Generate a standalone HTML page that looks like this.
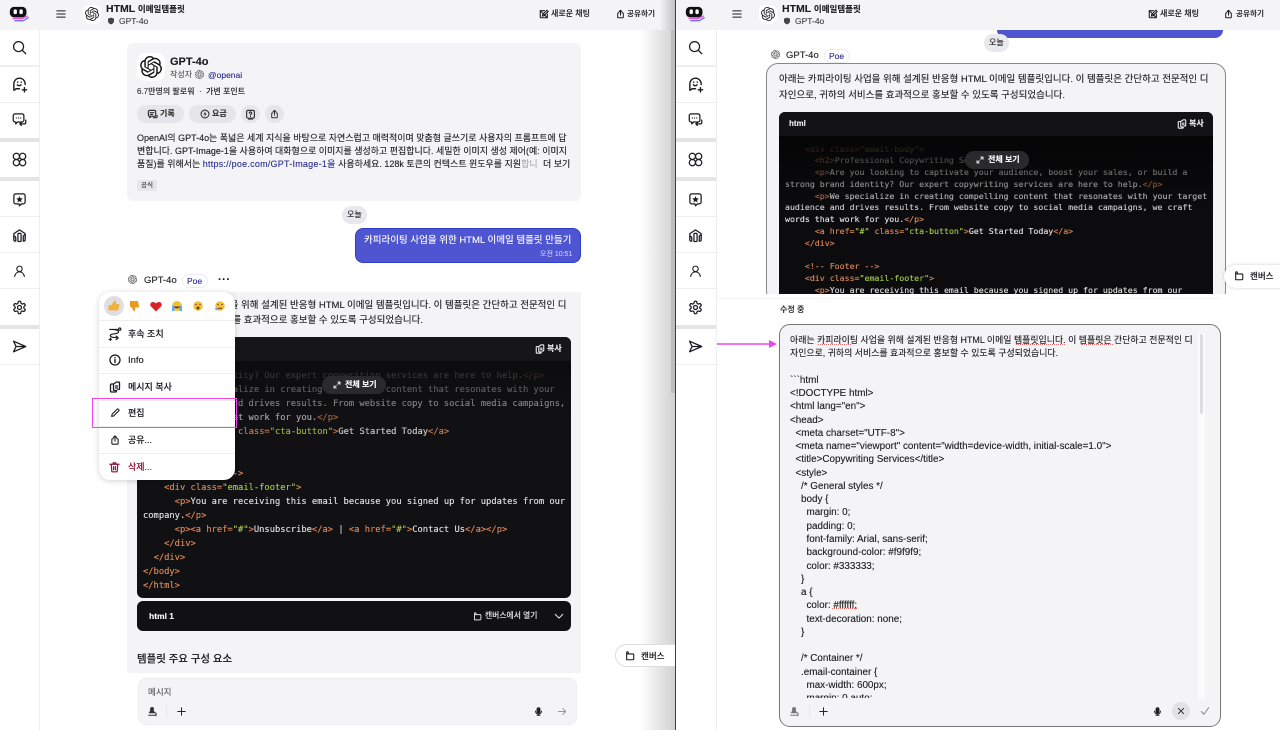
<!DOCTYPE html>
<html lang="ko"><head><meta charset="utf-8"><title>HTML 이메일템플릿</title>
<style>
html,body{margin:0;padding:0;width:1280px;height:730px;overflow:hidden;background:#fff}
body{position:relative;font-family:"Liberation Sans","Noto Sans CJK KR",sans-serif;color:#1b1b20;-webkit-text-stroke:.12px}
div,span.t,svg.i{position:absolute}
.t{position:absolute;white-space:nowrap;line-height:14px;font-size:10px}
.b{font-weight:700}
svg.i{fill:none;stroke:currentColor;stroke-width:2;stroke-linecap:round;stroke-linejoin:round;color:#1b1b20}
svg.i.s{stroke-width:2.6}
.c{position:absolute;white-space:pre;font-family:"DejaVu Sans Mono","Liberation Mono",monospace;color:#e4e4e4}
.o{color:#e08a5c}.g{color:#a8cc50}
.sep{background:#eeeef0}
.thick{background:#e4e4e7}
.menu-line{left:0;width:136px;height:1px;background:#eeeef0}
.e{position:absolute;white-space:nowrap;line-height:13.27px;font-size:9.900px;color:#1b1b20}
.k{font-size:8.920px}
.sq{height:0;border-bottom:1px dotted #e07070}
.hk{font-size:8.500px}
</style></head><body>
<svg width="0" height="0" style="position:absolute">
<defs>
<symbol id="oai" viewBox="0 0 24 24"><path stroke="none" fill="currentColor" d="M22.2819 9.8211a5.9847 5.9847 0 0 0-.5157-4.9108 6.0462 6.0462 0 0 0-6.5098-2.9A6.0651 6.0651 0 0 0 4.9807 4.1818a5.9847 5.9847 0 0 0-3.9977 2.9 6.0462 6.0462 0 0 0 .7427 7.0966 5.98 5.98 0 0 0 .511 4.9107 6.051 6.051 0 0 0 6.5146 2.9001A5.9847 5.9847 0 0 0 13.2599 24a6.0557 6.0557 0 0 0 5.7718-4.2058 5.9894 5.9894 0 0 0 3.9977-2.9001 6.0557 6.0557 0 0 0-.7475-7.0729zm-9.022 12.6081a4.4755 4.4755 0 0 1-2.8764-1.0408l.1419-.0804 4.7783-2.7582a.7948.7948 0 0 0 .3927-.6813v-6.7369l2.02 1.1686a.071.071 0 0 1 .038.052v5.5826a4.504 4.504 0 0 1-4.4945 4.4944zm-9.6607-4.1254a4.4708 4.4708 0 0 1-.5346-3.0137l.142.0852 4.783 2.7582a.7712.7712 0 0 0 .7806 0l5.8428-3.3685v2.3324a.0804.0804 0 0 1-.0332.0615L9.74 19.9502a4.4992 4.4992 0 0 1-6.1408-1.6464zM2.3408 7.8956a4.485 4.485 0 0 1 2.3655-1.9728V11.6a.7664.7664 0 0 0 .3879.6765l5.8144 3.3543-2.0201 1.1685a.0757.0757 0 0 1-.071 0l-4.8303-2.7865A4.504 4.504 0 0 1 2.3408 7.872zm16.5963 3.8558L13.1038 8.364 15.1192 7.2a.0757.0757 0 0 1 .071 0l4.8303 2.7913a4.4944 4.4944 0 0 1-.6765 8.1042v-5.6772a.79.79 0 0 0-.407-.667zm2.0107-3.0231l-.142-.0852-4.7735-2.7818a.7759.7759 0 0 0-.7854 0L9.409 9.2297V6.8974a.0662.0662 0 0 1 .0284-.0615l4.8303-2.7866a4.4992 4.4992 0 0 1 6.6802 4.66zM8.3065 12.863l-2.02-1.1638a.0804.0804 0 0 1-.038-.0567V6.0742a4.4992 4.4992 0 0 1 7.3757-3.4537l-.142.0805L8.704 5.459a.7948.7948 0 0 0-.3927.6813zm1.0976-2.3654l2.602-1.4998 2.6069 1.4998v2.9994l-2.5974 1.4997-2.6067-1.4997Z"/></symbol>
<symbol id="logo" viewBox="0 0 24 24"><path stroke="#e94fe0" stroke-width="1.600" d="M5 17.500h11l6-3"/><path stroke="#7a6cf0" stroke-width="1.600" d="M7 20h10l6-3.500"/><rect x="1" y="3.500" width="20" height="12.500" rx="5" fill="#111" stroke="none"/><rect x="5.500" y="6.500" width="4" height="5.600" rx="1.700" fill="#fff" stroke="none"/><rect x="12.500" y="6.500" width="4" height="5.600" rx="1.700" fill="#fff" stroke="none"/></symbol>
<symbol id="search" viewBox="0 0 24 24"><circle cx="10.500" cy="10.500" r="8"/><path d="M16.500 16.500l5.500 5.500"/></symbol>
<symbol id="add" viewBox="0 0 24 24"><path d="M4 20v-9a8 8 0 0 1 15-3.800c.6 1.100 1 2.400 1 3.800v1M4 20c2-.4 3-2 3-2h5"/><path d="M9 12.500c1 1.600 4 1.600 5.200 0"/><path d="M9.500 8.500v.3M14.500 8.500v.3"/><path d="M19 16.500v6M16 19.500h6"/></symbol>
<symbol id="chat" viewBox="0 0 24 24"><path d="M5 3h11a3 3 0 0 1 3 3v7a3 3 0 0 1-3 3H9l-3 3v-3H5a3 3 0 0 1-3-3V6a3 3 0 0 1 3-3z"/><path d="M7 9.500v.1M10.500 9.500v.1M14 9.500v.1"/><path d="M22 13v4a2 2 0 0 1-2 2h-7M15 21.500L12.500 19l2.500-2"/></symbol>
<symbol id="apps" viewBox="0 0 24 24"><circle cx="7" cy="7" r="5"/><circle cx="17" cy="7" r="5"/><circle cx="7" cy="17" r="5"/><circle cx="17" cy="17" r="5"/></symbol>
<symbol id="star" viewBox="0 0 24 24"><path d="M6 3h12a3 3 0 0 1 3 3v10a3 3 0 0 1-3 3h-3l-3 3-1-3H6a3 3 0 0 1-3-3V6a3 3 0 0 1 3-3z"/><path fill="currentColor" stroke="none" d="M12 6.500l1.600 3.400 3.700.4-2.800 2.500.8 3.700-3.300-1.900-3.300 1.900.8-3.700-2.800-2.500 3.700-.4z"/></symbol>
<symbol id="an" viewBox="0 0 24 24"><path d="M3 9l9-6 9 6M3 9v8M21 9v8"/><path d="M3 13a3 3 0 0 1 3 3v5H5a2 2 0 0 1-2-2z"/><rect x="9.500" y="8.500" width="5" height="13" rx="1"/><path d="M21 11a3 3 0 0 0-3 3v7h1a2 2 0 0 0 2-2z"/></symbol>
<symbol id="person" viewBox="0 0 24 24"><circle cx="12" cy="8" r="5"/><path d="M3 22c1-5 4.500-8.500 9-8.500s8 3.500 9 8.500"/></symbol>
<symbol id="gear" viewBox="0 0 24 24"><path d="M12.220 2h-.44a2 2 0 0 0-2 2v.18a2 2 0 0 1-1 1.730l-.43.25a2 2 0 0 1-2 0l-.15-.08a2 2 0 0 0-2.730.73l-.22.38a2 2 0 0 0 .73 2.730l.15.1a2 2 0 0 1 1 1.720v.51a2 2 0 0 1-1 1.740l-.15.09a2 2 0 0 0-.73 2.730l.22.38a2 2 0 0 0 2.730.73l.15-.08a2 2 0 0 1 2 0l.43.25a2 2 0 0 1 1 1.730V20a2 2 0 0 0 2 2h.44a2 2 0 0 0 2-2v-.18a2 2 0 0 1 1-1.730l.43-.25a2 2 0 0 1 2 0l.15.08a2 2 0 0 0 2.730-.73l.22-.39a2 2 0 0 0-.73-2.730l-.15-.08a2 2 0 0 1-1-1.740v-.5a2 2 0 0 1 1-1.740l.15-.09a2 2 0 0 0 .73-2.730l-.22-.38a2 2 0 0 0-2.730-.73l-.15.08a2 2 0 0 1-2 0l-.43-.25a2 2 0 0 1-1-1.730V4a2 2 0 0 0-2-2z"/><circle cx="12" cy="12" r="3.200"/></symbol>
<symbol id="send" viewBox="0 0 24 24"><path d="M2.500 3.500L22 12 2.500 20.500 6.500 12zM6.500 12H22"/></symbol>
<symbol id="menu" viewBox="0 0 24 24"><path d="M2 4.500h20M2 12h20M2 19.500h20"/></symbol>
<symbol id="shield" viewBox="0 0 24 24"><path fill="currentColor" stroke="none" d="M12 2l9 3v7c0 5-4 8.500-9 10-5-1.500-9-5-9-10V5z"/></symbol>
<symbol id="new" viewBox="0 0 24 24"><path d="M20 12v7a2 2 0 0 1-2 2H5a2 2 0 0 1-2-2V6a2 2 0 0 1 2-2h8"/><path d="M8 17l1-4L19 3l3 3-10 10zM3 4l17 17"/></symbol>
<symbol id="share" viewBox="0 0 24 24"><path d="M8 9H6a1.500 1.500 0 0 0-1.500 1.500v10A1.500 1.500 0 0 0 6 22h12a1.500 1.500 0 0 0 1.500-1.500v-10A1.500 1.500 0 0 0 18 9h-2"/><path d="M12 15V2.500M8 6l4-4 4 4"/></symbol>
<symbol id="hist" viewBox="0 0 24 24"><path d="M6 3h10a3 3 0 0 1 3 3v7a3 3 0 0 1-3 3H9l-3 3v-3a3 3 0 0 1-3-3V6a3 3 0 0 1 3-3z"/><path d="M7 8h8M7 12h5"/><path d="M22 14v3a2 2 0 0 1-2 2h-6"/></symbol>
<symbol id="bolt" viewBox="0 0 24 24"><circle cx="12" cy="12" r="9.500"/><path fill="currentColor" stroke="none" d="M13 5.500L8 13h3.500L11 18.500l5-7.500h-3.500z"/></symbol>
<symbol id="qm" viewBox="0 0 24 24"><rect x="3.500" y="3" width="17" height="17" rx="3"/><path d="M9.500 9a2.500 2.500 0 1 1 3.500 2.300c-.7.400-1 .8-1 1.700M12 16v.2"/><path d="M8 22h8"/></symbol>
<symbol id="copy" viewBox="0 0 24 24"><path d="M9 6H5a2 2 0 0 0-2 2v12a2 2 0 0 0 2 2h8a2 2 0 0 0 2-2v-1"/><path d="M9 6l6-4h4a2 2 0 0 1 2 2v11a2 2 0 0 1-2 2h-1M9 6v11a2 2 0 0 0 2 2h4"/><path d="M13 10h4M13 14h4"/></symbol>
<symbol id="canvas" viewBox="0 0 24 24"><path d="M4 21V4a2 2 0 0 1 4 0v3h11a2 2 0 0 1 2 2v10a2 2 0 0 1-2 2H4z"/><path d="M4 7h4"/></symbol>
<symbol id="expand" viewBox="0 0 24 24"><path d="M14 3h7v7M21 3l-7 7M10 21H3v-7M3 21l7-7"/></symbol>
<symbol id="down" viewBox="0 0 24 24"><path d="M3 8l9 9 9-9"/></symbol>
<symbol id="follow" viewBox="0 0 24 24"><circle cx="20" cy="4.500" r="2"/><path d="M3 5h13M3 5c6 0 15 .5 15 4.500s-14 2-14 6 7 3.500 13 3.500M14 16.500l3.500 3-3.500 3"/><path d="M4 20v4M2 22h4"/></symbol>
<symbol id="info" viewBox="0 0 24 24"><circle cx="12" cy="12" r="10"/><path d="M12 11v6M12 7v.3" stroke-width="2.800"/></symbol>
<symbol id="pen" viewBox="0 0 24 24"><path d="M4 20l1-5L17 3a2 2 0 0 1 3 0l1 1a2 2 0 0 1 0 3L9 19z"/></symbol>
<symbol id="trash" viewBox="0 0 24 24"><path d="M2 6h20M9 6V3h6v3M5 6l1 15a1.500 1.500 0 0 0 1.500 1.500h9A1.500 1.500 0 0 0 18 21l1-15M10 11v7M14 11v7"/></symbol>
<symbol id="bot" viewBox="0 0 24 24"><circle cx="12" cy="6" r="3.500" fill="currentColor"/><path fill="currentColor" d="M7 14l1.500-4h7L17 14z"/><path d="M4 21h15a3 3 0 0 0 0-6H5.500"/><path d="M21 22h.5"/></symbol>
<symbol id="plus" viewBox="0 0 24 24"><path d="M12 2v20M2 12h20"/></symbol>
<symbol id="mic" viewBox="0 0 24 24"><rect x="8" y="2" width="8" height="14" rx="4" fill="currentColor"/><path d="M4 11a8 8 0 0 0 16 0M12 19v3M8 22h8"/></symbol>
<symbol id="arrow" viewBox="0 0 24 24"><path d="M2 12h20M14 4l8 8-8 8"/></symbol>
<symbol id="x" viewBox="0 0 24 24"><path d="M4 4l16 16M20 4L4 20"/></symbol>
<symbol id="check" viewBox="0 0 24 24"><path d="M3 13l6 7L21 4"/></symbol>
</defs></svg>

<!-- LEFT PANEL -->
<div style="left:0;top:0;width:675px;height:30px;background:#f4f4f6"></div>
<div style="left:39px;top:30px;width:1px;height:700px;background:#eeeef0"></div>
<div class="sep" style="left:0;top:65px;width:39px;height:2px"></div>
<div class="sep" style="left:0;top:102px;width:39px;height:1px"></div>
<div class="thick" style="left:0;top:138px;width:39px;height:4px"></div>
<div class="thick" style="left:0;top:177px;width:39px;height:4px"></div>
<div class="sep" style="left:0;top:216px;width:39px;height:1px"></div>
<div class="sep" style="left:0;top:252px;width:39px;height:1px"></div>
<div class="sep" style="left:0;top:288px;width:39px;height:1px"></div>
<div class="thick" style="left:0;top:325px;width:39px;height:4px"></div>
<div class="sep" style="left:0;top:364px;width:39px;height:1px"></div>
<svg class="i" style="left:9px;top:4px;width:20px;height:20px"><use href="#logo"/></svg>
<svg class="i" style="left:12px;top:40px;width:15px;height:15px"><use href="#search"/></svg>
<svg class="i" style="left:11px;top:76px;width:17px;height:17px"><use href="#add"/></svg>
<svg class="i" style="left:12px;top:112px;width:15px;height:15px"><use href="#chat"/></svg>
<svg class="i" style="left:12px;top:152px;width:15px;height:15px"><use href="#apps"/></svg>
<svg class="i" style="left:12px;top:192px;width:15px;height:15px"><use href="#star"/></svg>
<svg class="i" style="left:12px;top:228px;width:15px;height:15px"><use href="#an"/></svg>
<svg class="i" style="left:13px;top:264px;width:13px;height:14px"><use href="#person"/></svg>
<svg class="i" style="left:12px;top:300px;width:15px;height:15px"><use href="#gear"/></svg>
<svg class="i" style="left:12px;top:339px;width:15px;height:15px"><use href="#send"/></svg>

<svg class="i s" style="left:56px;top:9px;width:10px;height:10px"><use href="#menu"/></svg>
<div style="left:83px;top:5px;width:18px;height:19px;background:#fff;border-radius:6px"></div>
<svg class="i" style="left:85px;top:7px;width:14px;height:14px;color:#222"><use href="#oai"/></svg>
<span class="t b" style="left:106px;top:2px;font-size:10.500px">HTML <span class="hk">이메일템플릿</span></span>
<svg class="i" style="left:107px;top:17px;width:8px;height:8px;color:#444"><use href="#shield"/></svg>
<span class="t" style="left:119px;top:14px;font-size:8.500px;color:#444">GPT-4o</span>
<svg class="i s" style="left:539px;top:9px;width:10px;height:10px"><use href="#new"/></svg>
<span class="t" style="left:551px;top:7px;font-size:8px;font-weight:500">새로운 채팅</span>
<svg class="i s" style="left:616px;top:9px;width:9px;height:10px"><use href="#share"/></svg>
<span class="t" style="left:627px;top:7px;font-size:7.600px;font-weight:500">공유하기</span>

<!-- top card -->
<div style="left:127px;top:43px;width:454px;height:158px;background:#f4f4f6;border-radius:6px"></div>
<div style="left:137px;top:53px;width:28px;height:28px;background:#fff;border-radius:8px"></div>
<svg class="i" style="left:140px;top:56px;width:22px;height:22px;color:#111"><use href="#oai"/></svg>
<span class="t b" style="left:170px;top:55px;font-size:11px">GPT-4o</span>
<span class="t" style="left:170px;top:68px;font-size:8px;color:#555">작성자</span>
<svg class="i" style="left:195px;top:70px;width:9px;height:9px;color:#555"><use href="#oai"/></svg>
<span class="t" style="left:208px;top:68px;font-size:8.500px;color:#2b2f8f">@openai</span>
<span class="t" style="left:137px;top:85px;font-size:8px;color:#333;font-weight:500">6.7만명의 팔로워 &nbsp;·&nbsp; 가변 포인트</span>
<div style="left:137px;top:105px;width:47px;height:18px;background:#e6e6ea;border-radius:9px"></div>
<svg class="i s" style="left:147px;top:109px;width:11px;height:11px;color:#333"><use href="#hist"/></svg>
<span class="t" style="left:160px;top:107px;font-size:8px;font-weight:700;color:#333">기록</span>
<div style="left:189px;top:105px;width:47px;height:18px;background:#e6e6ea;border-radius:9px"></div>
<svg class="i s" style="left:200px;top:109px;width:10px;height:10px;color:#333"><use href="#bolt"/></svg>
<span class="t" style="left:212px;top:107px;font-size:8px;font-weight:700;color:#333">요금</span>
<div style="left:241px;top:105px;width:19px;height:18px;background:#e6e6ea;border-radius:9px"></div>
<svg class="i s" style="left:245px;top:109px;width:11px;height:11px;color:#333"><use href="#qm"/></svg>
<div style="left:265px;top:105px;width:19px;height:18px;background:#e6e6ea;border-radius:9px"></div>
<svg class="i s" style="left:270px;top:109px;width:9px;height:10px;color:#333"><use href="#share"/></svg>
<span class="t" style="left:137px;top:131px;font-size:8.970px">OpenAI의 GPT-4o는 폭넓은 세계 지식을 바탕으로 자연스럽고 매력적이며 맞춤형 글쓰기로 사용자의 프롬프트에 답</span>
<span class="t" style="left:137px;top:144px;font-size:8.970px">변합니다. GPT-Image-1을 사용하여 대화형으로 이미지를 생성하고 편집합니다. 세밀한 이미지 생성 제어(예: 이미지</span>
<span class="t" style="left:137px;top:157px;font-size:8.970px">품질)를 위해서는 <span style="color:#2b2f8f;letter-spacing:.25px">https://poe.com/GPT-Image-1을</span> 사용하세요. 128k 토큰의 컨텍스트 윈도우를 지원<span style="color:#aaa">합니</span></span>
<span class="t" style="left:543px;top:157px;font-size:8.970px">더 보기</span>
<div style="left:137px;top:180px;width:20px;height:11px;background:#e6e6ea;border-radius:2px"></div>
<span class="t" style="left:141px;top:178.500px;font-size:6.500px;color:#333">공식</span>
<div style="left:342px;top:206px;width:25px;height:18px;background:#e9e9ed;border-radius:9px"></div>
<span class="t" style="left:347px;top:208px;font-size:8px">오늘</span>
<div style="left:355px;top:228px;width:226px;height:35px;background:#4f55d1;border:.5px solid #2f3fc4;border-radius:8px;box-sizing:border-box"></div>
<span class="t" style="left:364px;top:234px;font-size:9.500px;color:#fff">카피라이팅 사업을 위한 HTML 이메일 템플릿 만들기</span>
<span class="t" style="left:540px;top:248px;font-size:7px;color:#c9cbf3">오전 10:51</span>

<!-- bot msg -->
<svg class="i" style="left:128px;top:275px;width:9px;height:9px;color:#444"><use href="#oai"/></svg>
<span class="t" style="left:144px;top:274px;font-size:9.500px;color:#222">GPT-4o</span>
<div style="left:182px;top:274px;width:24px;height:12px;border:1px solid #ececf0;border-radius:7px;background:#fff"></div>
<span class="t" style="left:187px;top:274px;font-size:8.500px;color:#2b2f8f">Poe</span>
<span class="t b" style="left:218px;top:273px;font-size:11px;letter-spacing:.5px">···</span>
<div style="left:127px;top:292px;width:454px;height:381px;background:#f4f4f6"></div>
<span class="t" style="left:137px;top:299px;font-size:9.500px">아래는 카피라이팅 사업을 위해 설계된 반응형 HTML 이메일 템플릿입니다. 이 템플릿은 간단하고 전문적인 디</span>
<span class="t" style="left:137px;top:314px;font-size:9.500px">자인으로, 귀하의 서비스를 효과적으로 홍보할 수 있도록 구성되었습니다.</span>

<div style="left:137px;top:337px;width:434px;height:261px;background:#111113;border-radius:6px;overflow:hidden">
<div class="c" style="left:6px;top:31.500px;font-size:8.780px;line-height:14px">strong brand identity? Our expert copywriting services are here to help.<span class="o">&lt;/p&gt;</span>
      <span class="o">&lt;p&gt;</span>We specialize in creating compelling content that resonates with your
target audience and drives results. From website copy to social media campaigns,
we craft words that work for you.<span class="o">&lt;/p&gt;</span>
      <span class="o">&lt;a href=</span><span class="g">"#"</span> <span class="o">class=</span><span class="g">"cta-button"</span><span class="o">&gt;</span>Get Started Today<span class="o">&lt;/a&gt;</span>
    <span class="o">&lt;/div&gt;</span>

    <span class="o">&lt;!-- Footer --&gt;</span>
    <span class="o">&lt;div</span> <span class="o">class=</span><span class="g">"email-footer"</span><span class="o">&gt;</span>
      <span class="o">&lt;p&gt;</span>You are receiving this email because you signed up for updates from our
company.<span class="o">&lt;/p&gt;</span>
      <span class="o">&lt;p&gt;&lt;a href=</span><span class="g">"#"</span><span class="o">&gt;</span>Unsubscribe<span class="o">&lt;/a&gt;</span> | <span class="o">&lt;a href=</span><span class="g">"#"</span><span class="o">&gt;</span>Contact Us<span class="o">&lt;/a&gt;&lt;/p&gt;</span>
    <span class="o">&lt;/div&gt;</span>
  <span class="o">&lt;/div&gt;</span>
<span class="o">&lt;/body&gt;</span>
<span class="o">&lt;/html&gt;</span></div>
<div style="left:0;top:24px;width:434px;height:80px;background:linear-gradient(#0c0c0e,rgba(17,17,19,.3) 70%,rgba(17,17,19,0))"></div>
<div style="left:0;top:0;width:434px;height:24px;background:#161618"></div>
</div>
<svg class="i s" style="left:535px;top:344px;width:10px;height:10px;color:#eee"><use href="#copy"/></svg>
<span class="t b" style="left:547px;top:342px;font-size:8px;color:#eee">복사</span>
<div style="left:322px;top:376px;width:64px;height:18px;background:#2a2a2e;border-radius:9px"></div>
<svg class="i s" style="left:333px;top:381px;width:8px;height:8px;color:#fff"><use href="#expand"/></svg>
<span class="t b" style="left:345px;top:378px;font-size:8px;color:#fff">전체 보기</span>

<div style="left:137px;top:601px;width:434px;height:30px;background:#111113;border-radius:6px"></div>
<span class="t b" style="left:149px;top:609px;font-size:8.500px;color:#fff">html 1</span>
<svg class="i s" style="left:473px;top:612px;width:9px;height:9px;color:#ddd"><use href="#canvas"/></svg>
<span class="t" style="left:485px;top:609px;font-size:7.800px;font-weight:500;color:#ddd">캔버스에서 열기</span>
<svg class="i s" style="left:554px;top:611px;width:10px;height:10px;color:#ddd"><use href="#down"/></svg>
<span class="t" style="left:137px;top:653px;font-size:10.450px;font-weight:500">템플릿 주요 구성 요소</span>

<div style="left:40px;top:673px;width:635px;height:57px;background:#fff"></div>
<div style="left:138px;top:678px;width:439px;height:47px;background:#f4f4f6;border-radius:8px;border:.5px solid #eeeef0;box-sizing:border-box"></div>
<span class="t" style="left:148px;top:685px;font-size:8.500px;color:#555">메시지</span>
<svg class="i s" style="left:147px;top:706px;width:10px;height:11px;color:#333"><use href="#bot"/></svg>
<div style="left:166px;top:704px;width:1px;height:14px;background:#e8e8ec"></div>
<svg class="i s" style="left:177px;top:707px;width:9px;height:9px;color:#222"><use href="#plus"/></svg>
<svg class="i s" style="left:534px;top:706px;width:9px;height:11px;color:#222"><use href="#mic"/></svg>
<svg class="i s" style="left:557px;top:707px;width:10px;height:9px;color:#999"><use href="#arrow"/></svg>

<!-- canvas pill left + shadow -->
<div style="left:640px;top:30px;width:35px;height:700px;background:linear-gradient(90deg,rgba(120,120,120,0),rgba(120,120,120,.34))"></div>
<div style="left:615px;top:644px;width:70px;height:23px;background:#fff;border:1px solid #ddd;border-radius:12px;box-sizing:border-box"></div>
<svg class="i s" style="left:625px;top:651px;width:10px;height:10px"><use href="#canvas"/></svg>
<span class="t" style="left:641px;top:649px;font-size:8.500px;font-weight:500">캔버스</span>
<div style="left:671px;top:30px;width:4px;height:363px;background:#bdbdc0"></div>
<div style="left:660px;top:0;width:15px;height:30px;background:linear-gradient(90deg,rgba(120,120,120,0),rgba(120,120,120,.4))"></div>

<!-- Menu -->
<div style="left:99px;top:292px;width:136px;height:188px;background:#fff;border-radius:11px;box-shadow:0 1px 6px rgba(0,0,0,.18)">
<div class="menu-line" style="top:28px"></div><div class="menu-line" style="top:55px"></div><div class="menu-line" style="top:81px"></div><div class="menu-line" style="top:108px"></div><div class="menu-line" style="top:134px"></div><div class="menu-line" style="top:161px"></div>
</div>
<div style="left:104px;top:296px;width:20px;height:20px;background:#dfdfe3;border-radius:50%"></div>
<svg style="position:absolute;left:104px;top:296px" width="132" height="20" viewBox="0 0 132 20">
<g transform="translate(-1.500,0)"><path fill="#f0b23e" d="M6 9h3l3-4.500c1.500 0 2 1 1.500 3.500H16c.8 0 1 .7.900 1.300l-1 4c-.2.700-.6 1.200-1.500 1.200H6z"/></g>
<path fill="#e89b20" d="M26 5h7c.8 0 1 .4 1.100 1l1 4.500c.1.600-.3 1-1 1h-3c.3 2 .1 4-1.500 3.700L27.500 11H26z"/>
<path fill="#d8232a" d="M52 15.500l-5-5c-2.600-3 1.800-6.500 5-3 3.200-3.500 7.600 0 5 3z"/>
<g transform="translate(-9,0)"><circle cx="82" cy="10" r="5" fill="#f3c03c"/><path fill="#5aaef0" d="M77 10h2.500v5h-2.500zM84.500 10H87v5h-2.500z"/><path fill="#6b3a14" d="M79 10.500h6c-.5 2.500-5.500 2.500-6 0z"/></g>
<g transform="translate(-9,0)"><circle cx="103" cy="10" r="4.800" fill="#f3c03c"/><circle cx="103" cy="12" r="1.500" fill="#6b3a14"/><circle cx="101" cy="8.500" r=".7" fill="#6b3a14"/><circle cx="105" cy="8.500" r=".7" fill="#6b3a14"/></g>
<g transform="translate(-8,0)"><circle cx="124" cy="10" r="4.800" fill="#f3c03c"/><path stroke="#6b3a14" fill="none" d="M122 13c1-1.200 3-1.200 4 0"/><circle cx="122" cy="8.500" r=".7" fill="#6b3a14"/><circle cx="126" cy="8.500" r=".7" fill="#6b3a14"/><circle cx="120.500" cy="13" r="1.300" fill="#5aaef0"/></g></svg>
<svg class="i" style="left:108px;top:326px;width:14px;height:15px"><use href="#follow"/></svg>
<span class="t" style="left:128px;top:327px;font-size:9px;font-weight:500">후속 조치</span>
<svg class="i s" style="left:109px;top:354px;width:12px;height:12px"><use href="#info"/></svg>
<span class="t" style="left:128px;top:354px;font-size:9.500px">Info</span>
<svg class="i s" style="left:109px;top:381px;width:12px;height:12px"><use href="#copy"/></svg>
<span class="t" style="left:128px;top:380px;font-size:9px;font-weight:500">메시지 복사</span>
<svg class="i s" style="left:110px;top:408px;width:10px;height:10px"><use href="#pen"/></svg>
<span class="t" style="left:128px;top:406px;font-size:9px;font-weight:500">편집</span>
<svg class="i s" style="left:110px;top:434px;width:10px;height:12px"><use href="#share"/></svg>
<span class="t" style="left:128px;top:433px;font-size:9px;font-weight:500">공유...</span>
<svg class="i s" style="left:109px;top:461px;width:11px;height:12px;color:#8f1338"><use href="#trash"/></svg>
<span class="t" style="left:128px;top:460px;font-size:9px;font-weight:500;color:#8f1338">삭제...</span>
<div style="left:92px;top:398px;width:145px;height:30px;border:1.500px solid #ee44ee;box-sizing:border-box"></div>

<!-- RIGHT PANEL -->
<div style="left:676px;top:0;width:604px;height:730px;background:#fff"></div>
<div style="left:675px;top:0;width:1px;height:730px;background:#3d3566"></div>
<div style="left:676px;top:0;width:604px;height:30px;background:#f4f4f6"></div>
<div style="left:716px;top:30px;width:1px;height:700px;background:#eeeef0"></div>
<div class="sep" style="left:676px;top:65px;width:40px;height:2px"></div>
<div class="sep" style="left:676px;top:102px;width:40px;height:1px"></div>
<div class="thick" style="left:676px;top:138px;width:40px;height:4px"></div>
<div class="thick" style="left:676px;top:177px;width:40px;height:4px"></div>
<div class="sep" style="left:676px;top:216px;width:40px;height:1px"></div>
<div class="sep" style="left:676px;top:252px;width:40px;height:1px"></div>
<div class="sep" style="left:676px;top:288px;width:40px;height:1px"></div>
<div class="thick" style="left:676px;top:325px;width:40px;height:4px"></div>
<div class="sep" style="left:676px;top:364px;width:40px;height:1px"></div>
<svg class="i" style="left:685px;top:4px;width:20px;height:20px"><use href="#logo"/></svg>
<svg class="i" style="left:688px;top:40px;width:15px;height:15px"><use href="#search"/></svg>
<svg class="i" style="left:687px;top:76px;width:17px;height:17px"><use href="#add"/></svg>
<svg class="i" style="left:688px;top:112px;width:15px;height:15px"><use href="#chat"/></svg>
<svg class="i" style="left:688px;top:152px;width:15px;height:15px"><use href="#apps"/></svg>
<svg class="i" style="left:688px;top:192px;width:15px;height:15px"><use href="#star"/></svg>
<svg class="i" style="left:688px;top:228px;width:15px;height:15px"><use href="#an"/></svg>
<svg class="i" style="left:689px;top:264px;width:13px;height:14px"><use href="#person"/></svg>
<svg class="i" style="left:688px;top:300px;width:15px;height:15px"><use href="#gear"/></svg>
<svg class="i" style="left:688px;top:339px;width:15px;height:15px"><use href="#send"/></svg>

<svg class="i s" style="left:732px;top:9px;width:10px;height:10px"><use href="#menu"/></svg>
<div style="left:759px;top:5px;width:18px;height:19px;background:#fff;border-radius:6px"></div>
<svg class="i" style="left:761px;top:7px;width:14px;height:14px;color:#222"><use href="#oai"/></svg>
<span class="t b" style="left:782px;top:2px;font-size:10.500px">HTML <span class="hk">이메일템플릿</span></span>
<svg class="i" style="left:783px;top:17px;width:8px;height:8px;color:#444"><use href="#shield"/></svg>
<span class="t" style="left:795px;top:14px;font-size:8.500px;color:#444">GPT-4o</span>
<svg class="i s" style="left:1148px;top:9px;width:10px;height:10px"><use href="#new"/></svg>
<span class="t" style="left:1160px;top:7px;font-size:8px;font-weight:500">새로운 채팅</span>
<svg class="i s" style="left:1224px;top:9px;width:9px;height:10px"><use href="#share"/></svg>
<span class="t" style="left:1236px;top:7px;font-size:7.600px;font-weight:500">공유하기</span>

<div style="left:997px;top:30px;width:226px;height:8px;background:#4f55d1;border-radius:0 0 8px 8px"></div>
<div style="left:984px;top:34px;width:25px;height:18px;background:#e9e9ed;border-radius:9px"></div>
<span class="t" style="left:989px;top:36px;font-size:8px">오늘</span>
<svg class="i" style="left:771px;top:50px;width:9px;height:9px;color:#444"><use href="#oai"/></svg>
<span class="t" style="left:786px;top:49px;font-size:9.500px;color:#222">GPT-4o</span>
<div style="left:824px;top:49px;width:24px;height:12px;border:1px solid #ececf0;border-radius:7px;background:#fff"></div>
<span class="t" style="left:829px;top:49px;font-size:8.500px;color:#2b2f8f">Poe</span>

<div style="left:766px;top:63px;width:460px;height:240px;background:#f4f4f6;border:1px solid #888;border-radius:12px;box-sizing:border-box"></div>
<span class="t" style="left:779px;top:73px;font-size:9.500px">아래는 카피라이팅 사업을 위해 설계된 반응형 HTML 이메일 템플릿입니다. 이 템플릿은 간단하고 전문적인 디</span>
<span class="t" style="left:779px;top:89px;font-size:9.500px">자인으로, 귀하의 서비스를 효과적으로 홍보할 수 있도록 구성되었습니다.</span>
<div style="left:779px;top:112px;width:434px;height:190px;background:#0c0c0e;border-radius:6px 6px 0 0;overflow:hidden">
<div class="c" style="left:6px;top:31.500px;font-size:8.250px;line-height:11.760px">    <span class="o">&lt;div</span> <span class="o">class=</span><span class="g">"email-body"</span><span class="o">&gt;</span>
      <span class="o">&lt;h2&gt;</span>Professional Copywriting Services<span class="o">&lt;/h2&gt;</span>
      <span class="o">&lt;p&gt;</span>Are you looking to captivate your audience, boost your sales, or build a
strong brand identity? Our expert copywriting services are here to help.<span class="o">&lt;/p&gt;</span>
      <span class="o">&lt;p&gt;</span>We specialize in creating compelling content that resonates with your target
audience and drives results. From website copy to social media campaigns, we craft
words that work for you.<span class="o">&lt;/p&gt;</span>
      <span class="o">&lt;a href=</span><span class="g">"#"</span> <span class="o">class=</span><span class="g">"cta-button"</span><span class="o">&gt;</span>Get Started Today<span class="o">&lt;/a&gt;</span>
    <span class="o">&lt;/div&gt;</span>

    <span class="o">&lt;!-- Footer --&gt;</span>
    <span class="o">&lt;div</span> <span class="o">class=</span><span class="g">"email-footer"</span><span class="o">&gt;</span>
      <span class="o">&lt;p&gt;</span>You are receiving this email because you signed up for updates from our</div>
<div style="left:0;top:24px;width:434px;height:80px;background:linear-gradient(#050506,rgba(5,5,6,.5) 50%,rgba(5,5,6,0))"></div>
<div style="left:0;top:0;width:434px;height:24px;background:#131315"></div>
</div>
<span class="t b" style="left:789px;top:117px;font-size:8px;color:#eee">html</span>
<svg class="i s" style="left:1177px;top:119px;width:10px;height:10px;color:#eee"><use href="#copy"/></svg>
<span class="t b" style="left:1189px;top:117px;font-size:8px;color:#eee">복사</span>
<div style="left:965px;top:151px;width:64px;height:18px;background:#2a2a2e;border-radius:9px"></div>
<svg class="i s" style="left:976px;top:156px;width:8px;height:8px;color:#fff"><use href="#expand"/></svg>
<span class="t b" style="left:988px;top:153px;font-size:8px;color:#fff">전체 보기</span>
<div style="left:1224px;top:265px;width:70px;height:23px;background:#fff;border-radius:12px;box-shadow:0 0 3px rgba(0,0,0,.2)"></div>
<svg class="i s" style="left:1234px;top:271px;width:10px;height:10px"><use href="#canvas"/></svg>
<span class="t" style="left:1250px;top:269px;font-size:8.500px;font-weight:500">캔버스</span>

<!-- edit area -->
<div style="left:717px;top:294px;width:563px;height:436px;background:#fff"></div>
<div style="left:717px;top:298px;width:503px;height:1px;background:#f4f4f6"></div>
<span class="t" style="left:780px;top:303px;font-size:8px;color:#222;font-weight:500">수정 중</span>
<div style="left:779px;top:324px;width:442px;height:403px;background:#f4f4f6;border:1px solid #777;border-radius:11px;box-sizing:border-box"></div>
<div style="left:1198px;top:333px;width:7px;height:366px;background:#fbfbfc"></div>
<div style="left:1200px;top:334px;width:3px;height:80px;background:#dcdce2;border-radius:2px"></div>
<div class="e" style="left:790px;top:334px;height:364px;width:407px;overflow:hidden;white-space:pre"><span class="k">아래는 카피라이팅 사업을 위해 설계된 반응형 HTML 이메일 템플릿입니다. 이 템플릿은 간단하고 전문적인 디</span>
<span class="k">자인으로, 귀하의 서비스를 효과적으로 홍보할 수 있도록 구성되었습니다.</span>

&#96;&#96;&#96;html
&lt;!DOCTYPE html&gt;
&lt;html lang="en"&gt;
&lt;head&gt;
  &lt;meta charset="UTF-8"&gt;
  &lt;meta name="viewport" content="width=device-width, initial-scale=1.0"&gt;
  &lt;title&gt;Copywriting Services&lt;/title&gt;
  &lt;style&gt;
    /* General styles */
    body {
      margin: 0;
      padding: 0;
      font-family: Arial, sans-serif;
      background-color: #f9f9f9;
      color: #333333;
    }
    a {
      color: #ffffff;
      text-decoration: none;
    }

    /* Container */
    .email-container {
      max-width: 600px;
      margin: 0 auto;</div>
<div class="sq" style="left:818px;top:344px;width:33px"></div>
<div class="sq" style="left:1016px;top:344px;width:49px"></div>
<div class="sq" style="left:1081px;top:344px;width:32px"></div>
<div class="sq" style="left:832px;top:608px;width:25px"></div>
<svg class="i s" style="left:789px;top:706px;width:10px;height:11px;color:#777"><use href="#bot"/></svg>
<div style="left:809px;top:704px;width:1px;height:14px;background:#e8e8ec"></div>
<svg class="i s" style="left:819px;top:707px;width:9px;height:9px;color:#222"><use href="#plus"/></svg>
<svg class="i s" style="left:1153px;top:706px;width:9px;height:11px;color:#222"><use href="#mic"/></svg>
<div style="left:1172px;top:702px;width:18px;height:18px;background:#e2e2e6;border-radius:50%"></div>
<svg class="i s" style="left:1177px;top:707px;width:8px;height:8px;color:#222"><use href="#x"/></svg>
<svg class="i" style="left:1200px;top:706px;width:10px;height:10px;color:#777"><use href="#check"/></svg>

<!-- magenta arrow -->
<svg style="position:absolute;left:717px;top:338px" width="62" height="12" viewBox="0 0 62 12"><path d="M0 6h54" stroke="#ee44ee" stroke-width="1.500"/><path d="M52 2L60 6l-8 4z" fill="#ee44ee"/></svg>
</body></html>
